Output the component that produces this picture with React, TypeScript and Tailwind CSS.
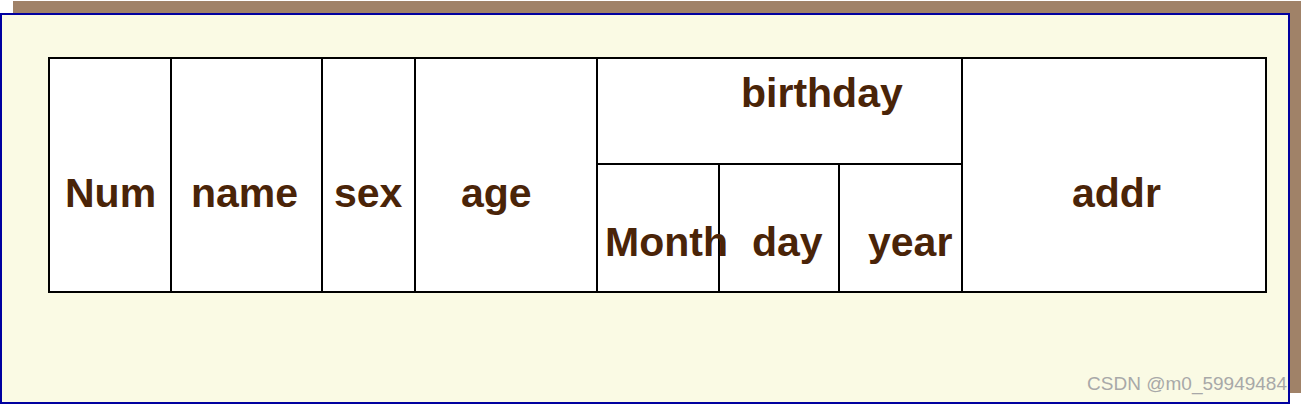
import React from 'react';

const txt = "text-[41px] leading-none font-bold text-[#4a2408] whitespace-nowrap";
const cell = "border-r-2 border-b-2 border-black";

export default function App() {
  return (
    <div className="relative w-[1303px] h-[404px] pt-[13px] bg-white font-['Liberation_Sans',Arial,sans-serif]">
      {/* drop shadow frame */}
      <div className="absolute left-[13px] top-[1px] w-[1288px] h-[392px] bg-[#a08268]" />
      <div className="relative w-[1290px] h-[391px] border-2 border-[#0000a0] bg-[#fafae4]">
        <div className="ml-[46px] mt-[42px] w-[1219px] border-l-2 border-t-2 border-black bg-white grid grid-cols-[122px_151px_93px_182px_122px_120px_123px_304px] grid-rows-[106px_128px]">
          <div className={`col-start-1 row-start-1 row-span-2 ${cell} pl-[15px] pt-[114px]`}>
            <span className={txt}>Num</span>
          </div>
          <div className={`col-start-2 row-start-1 row-span-2 ${cell} pl-[19px] pt-[114px]`}>
            <span className={txt}>name</span>
          </div>
          <div className={`col-start-3 row-start-1 row-span-2 ${cell} pl-[11px] pt-[114px]`}>
            <span className={txt}>sex</span>
          </div>
          <div className={`col-start-4 row-start-1 row-span-2 ${cell} pl-[45px] pt-[114px]`}>
            <span className={txt}>age</span>
          </div>
          <div className={`col-start-5 row-start-1 col-span-3 ${cell} pl-[143px] pt-[14px]`}>
            <span className={txt}>birthday</span>
          </div>
          <div className={`col-start-8 row-start-1 row-span-2 ${cell} pl-[109px] pt-[114px]`}>
            <span className={txt}>addr</span>
          </div>
          <div className={`col-start-5 row-start-2 ${cell} pl-[7px] pt-[57px]`}>
            <span className={txt}>Month</span>
          </div>
          <div className={`col-start-6 row-start-2 ${cell} pl-[32px] pt-[57px]`}>
            <span className={txt}>day</span>
          </div>
          <div className={`col-start-7 row-start-2 ${cell} pl-[28px] pt-[57px]`}>
            <span className={txt}>year</span>
          </div>
        </div>
        <span className="absolute right-[1px] bottom-[9px] text-[19px] leading-none text-[#a8a8a8] whitespace-nowrap">
          CSDN @m0_59949484
        </span>
      </div>
    </div>
  );
}
